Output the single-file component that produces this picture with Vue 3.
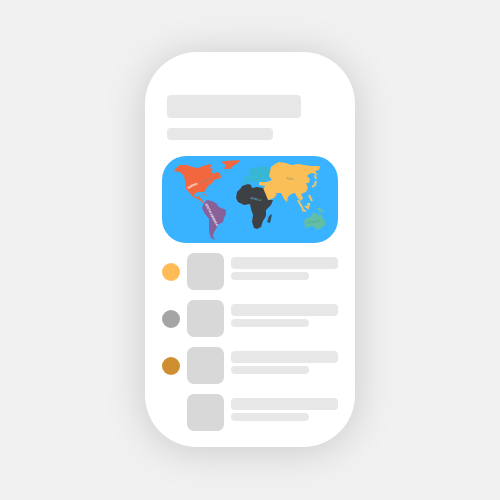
<script setup>
const rows = [
  { id: 1, medal: 'gold' },
  { id: 2, medal: 'silver' },
  { id: 3, medal: 'bronze' },
  { id: 4, medal: 'none' }
]
</script>

<template>
  <main class="stage">
    <section class="phone">
      <header class="heading">
        <div class="bar title"></div>
        <div class="bar subtitle"></div>
      </header>

      <svg class="map" viewBox="162 156 176 87" role="img">
        <!-- North America -->
        <path fill="#f3673f" d="M174 171 L175 169 L180 165 L187 165 L192 167 L198 168 L203 166 L210 164 L212 166 L209 168 L213 169 L211 172 L214 174 L216 172 L220 173 L221 178 L217 179 L214 180 L212 183 L208 186 L206 189 L204 192 L199 192 L195 193 L194 196 L197 197 L199 196 L201 199 L204 202 L203 203 L198 199 L193 197 L189 192 L186 189 L185 181 L184 176 L180 172 Z" />
        <path fill="#f3673f" d="M221 162 L226 161 L240 160 L238 163 L233 166 L230 169 L224 169 L226 165 Z" />
        <path fill="#d9765c" d="M201 193 L205 194 L208 196 L204 195 Z" />
        <!-- South America -->
        <path fill="#88609a" d="M204 203 L207 200 L212 201 L216 203 L219 207 L226 210 L226 214 L224 218 L223 222 L218 225 L216 229 L214 232 L213 236 L215 240 L211 238 L209 232 L209 219 L205 214 L202 208 Z" />
        <!-- Europe -->
        <path fill="#37b6d6" d="M241 184 L243 181 L247 180 L244 178 L244 176 L247 177 L250 178 L249 174 L248 171 L252 168 L256 167 L257 169 L260 167 L265 166 L270 168 L271 174 L269 179 L265 180 L265 182 L261 181 L258 184 L256 181 L254 181 L255 184 L250 181 L246 184 Z" />
        <!-- Asia -->
        <path fill="#fabf56" d="M271 167 L275 164 L279 162 L286 163 L291 165 L299 164 L310 166 L320 166 L319 170 L315 171 L318 175 L312 173 L309 174 L307 176 L310 179 L309 183 L306 183 L308 188 L306 192 L301 194 L303 198 L301 201 L297 197 L295 193 L291 194 L288 197 L287 202 L284 199 L281 193 L276 193 L273 191 L277 194 L274 198 L268 200 L265 195 L263 190 L265 186 L259 185 L259 182 L267 182 L272 180 L269 176 Z" />
        <path fill="none" stroke="#ecc668" stroke-width="2" d="M315 175 L316 179 M316 181 L315 185 L312 187 M309 195 L312 201 M298 200 L303 209 M305 206 L308 208 L309 204 L307 204 M302 210 L306 211" />
        <!-- Africa -->
        <path fill="#3e4144" d="M241 188 L242 186 L248 184 L251 185 L252 188 L257 187 L263 188 L266 195 L268 200 L273 200 L271 205 L266 210 L266 216 L263 221 L261 227 L257 229 L254 228 L252 222 L253 215 L251 209 L250 204 L244 205 L238 202 L236 198 L237 192 Z" />
        <path fill="#34505e" d="M269 216 L272 214 L271 219 L270 223 L267 222 L268 219 Z" />
        <!-- Oceania -->
        <path fill="#63bfa4" d="M304 221 L307 218 L311 217 L313 213 L317 213 L318 217 L320 212 L322 217 L325 221 L325 225 L320 229 L316 229 L313 226 L305 228 Z" />
        <path fill="#65bfae" d="M316 208 L320 208 L325 212 L322 212 L319 211 Z" />
        <g class="labels">
          <text x="188" y="189" transform="rotate(-25 188 189)">NORTH</text>
          <text class="dim" x="199" y="184" transform="rotate(-22 199 184)">AMERICA</text>
          <text x="205" y="204" transform="rotate(63 205 204)">SOUTH AMERICA</text>
          <text class="africa" x="250" y="199" transform="rotate(12 250 199)">AFRICA</text>
          <text class="asia" x="286" y="179" transform="rotate(10 286 179)">ASIA</text>
          <text class="europe" x="249" y="179" transform="rotate(-15 249 179)">EUROPE</text>
          <text class="oceania" x="307" y="224" transform="rotate(-10 307 224)">OCEANIA</text>
        </g>
      </svg>

      <ul class="list">
        <li v-for="row in rows" :key="row.id" class="row">
          <span class="medal" :class="row.medal"></span>
          <span class="avatar"></span>
          <span class="lines">
            <span class="bar primary"></span>
            <span class="bar secondary"></span>
          </span>
        </li>
      </ul>
    </section>
  </main>
</template>

<style>
body {
  margin: 0;
  background: #f1f1f1;
}
</style>

<style scoped>
.stage {
  box-sizing: border-box;
  min-height: 100vh;
  padding: 52px 29%;
  background: #f1f1f1;
}
.phone {
  box-sizing: border-box;
  padding: 43px 17px 16px;
  border-radius: 52px;
  background: #fff;
  box-shadow: 0 3px 40px rgba(0, 0, 0, 0.17);
}
.heading {
  display: flex;
  flex-direction: column;
  gap: 10px;
  padding: 0 5px;
}
.bar {
  display: block;
  border-radius: 4px;
  background: #e7e7e7;
}
.title {
  width: 81%;
  height: 23px;
}
.subtitle {
  width: 64%;
  height: 12px;
}
.map {
  display: block;
  width: 100%;
  margin: 16px 0 10px;
  border-radius: 24px;
  background: #39b3ff;
}
.labels {
  font: bold 3px "Liberation Sans", sans-serif;
  fill: #fff;
}
.dim {
  fill: #a78277;
}
.africa {
  fill: #6fa8c4;
}
.asia {
  fill: #a59a6a;
}
.europe {
  fill: #4abdc4;
}
.oceania {
  fill: #4cae9d;
}
.list {
  display: flex;
  flex-direction: column;
  gap: 10px;
  margin: 0;
  padding: 0;
  list-style: none;
}
.row {
  display: flex;
  align-items: center;
}
.medal {
  width: 18px;
  height: 18px;
  margin-right: 7px;
  border-radius: 50%;
}
.gold {
  background: #ffbb55;
}
.silver {
  background: #a5a5a5;
}
.bronze {
  background: #cf8f31;
}
.avatar {
  width: 37px;
  height: 37px;
  margin-right: 7px;
  border-radius: 7px;
  background: #d8d8d8;
}
.lines {
  display: flex;
  flex: 1;
  flex-direction: column;
  gap: 3px;
  padding-bottom: 6px;
}
.primary {
  height: 12px;
}
.secondary {
  width: 73%;
  height: 8px;
}
</style>
